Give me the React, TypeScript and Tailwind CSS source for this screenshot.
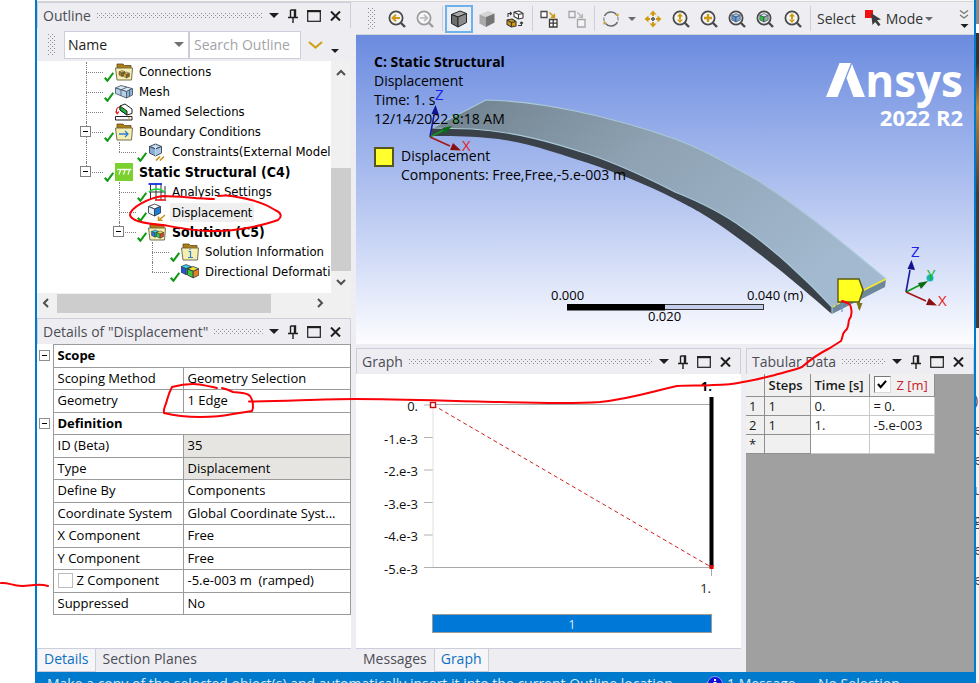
import { Fragment, useId, type ReactNode } from "react";

/* ---------- shared bits ---------- */

function Grip({ className }: { className: string }) {
  const id = useId();
  return (
    <svg className={className} aria-hidden="true">
      <defs>
        <pattern id={id} width="4" height="4" patternUnits="userSpaceOnUse">
          <rect x="0" y="0" width="1" height="1" fill="#8f8f96" />
          <rect x="2" y="2" width="1" height="1" fill="#8f8f96" />
        </pattern>
      </defs>
      <rect width="100%" height="100%" fill={`url(#${id})`} />
    </svg>
  );
}

function Caret({ color = "#1e1e1e", className = "h-[5px] w-[10px]" }: { color?: string; className?: string }) {
  return (
    <svg viewBox="0 0 10 5" className={className} aria-hidden="true">
      <path d="M0 0H10L5 5Z" fill={color} />
    </svg>
  );
}

function PanelHeader({ title }: { title: string }) {
  return (
    <header className="flex h-[26px] shrink-0 items-center border border-b-0 border-[#cccedb] bg-[#eeeef2] pr-[9px] pl-[5px] text-[#4c4c55]">
      <h2 className="whitespace-nowrap text-sm leading-5">{title}</h2>
      <Grip className="ml-[6px] mr-[6px] h-[5px] min-w-0 flex-1" />
      <div className="flex items-center gap-[9px]">
        <button aria-label="Panel menu">
          <Caret />
        </button>
        <button aria-label="Pin panel">
          <svg viewBox="0 0 10 14" className="h-[14px] w-[10px]">
            <path d="M2.5 1H7.5V8M2.5 1V8M6.5 1V8M0 8.5H10M5 9V14" stroke="#1e1e1e" strokeWidth="1.4" fill="none" />
          </svg>
        </button>
        <button aria-label="Maximize panel">
          <svg viewBox="0 0 14 12" className="h-3 w-[14px]">
            <rect x="0.7" y="0.7" width="12.6" height="10.6" fill="none" stroke="#1e1e1e" strokeWidth="1.2" />
            <path d="M0 1.2H14" stroke="#1e1e1e" strokeWidth="2" />
          </svg>
        </button>
        <button aria-label="Close panel">
          <svg viewBox="0 0 11 10" className="h-[10px] w-[11px]">
            <path d="M1 0.5L10 9.5M10 0.5L1 9.5" stroke="#1e1e1e" strokeWidth="2" />
          </svg>
        </button>
      </div>
    </header>
  );
}

function Tab({ label, active = false }: { label: string; active?: boolean }) {
  return (
    <button
      role="tab"
      aria-selected={active}
      className={
        active
          ? "flex h-full items-start border-r border-l border-b border-[#cccedb] bg-[#f6f6f8] px-[6px] text-sm leading-5 text-[#0e70c0]"
          : "flex h-full items-start px-[7px] text-sm leading-5 text-[#4c4c55]"
      }
    >
      {label}
    </button>
  );
}

/* ---------- outline tree ---------- */

function Folder({ children }: { children?: ReactNode }) {
  return (
    <g>
      <path d="M2 5V1H8L9.500 2.500H16V6Z" fill="#b07d12" stroke="#5d4a1c" strokeWidth="0.8" />
      <path d="M0.5 5H17.5L16.5 17H2Z" fill="#f6efb4" stroke="#77704e" strokeWidth="1" />
      {children}
    </g>
  );
}

function Cube({ x, y, s, top, left, right }: { x: number; y: number; s: number; top: string; left: string; right: string }) {
  return (
    <g transform={`translate(${x} ${y}) scale(${s})`} stroke="#33404d" strokeWidth="0.9" strokeLinejoin="round">
      <path d="M6 0L12 2.5L6 5L0 2.5Z" fill={top} />
      <path d="M0 2.5L6 5V12L0 9Z" fill={left} />
      <path d="M12 2.5L6 5V12L12 9Z" fill={right} />
    </g>
  );
}

const treeIcons: Record<string, ReactNode> = {
  connections: (
    <Folder>
      <Cube x={4} y={7.5} s={0.5} top="#e0b24b" left="#b07d12" right="#8f650c" />
      <Cube x={8.5} y={9} s={0.5} top="#e0b24b" left="#d8a531" right="#8f650c" />
    </Folder>
  ),
  mesh: (
    <g stroke="#4b5a6b" strokeWidth="0.9" fill="#b7cfe8" strokeLinejoin="round">
      <path d="M0.5 5L6 2.5L17 5.5L11.5 8.5Z" fill="#dce9f6" />
      <path d="M0.5 5L11.5 8.5V15L0.5 10.5Z" />
      <path d="M11.5 8.5L17.5 5.5V12L11.5 15Z" fill="#8fb2d8" />
      <path d="M6 6.8V12.7M6 6.8L12 4.2M14.5 7V13.5" fill="none" />
    </g>
  ),
  named: (
    <g strokeLinejoin="round">
      <path d="M5 3L10 1L17 6V10.5L12 12L5 7Z" fill="#fff" stroke="#222" />
      <path d="M5 3L12 8V12L5 7Z" fill="#1fb834" stroke="#222" />
      <path d="M4 4C1 5 1 8 2 10M0.5 8.5L2.2 10.8L4 8.5" fill="none" stroke="#e02020" strokeWidth="1.2" />
      <path d="M0.5 13.500H17V17H0.5Z" fill="#fff" stroke="#222" />
      <path d="M13 15H15" stroke="#c99700" />
    </g>
  ),
  boundary: (
    <Folder>
      <path d="M4 11H13M10 8L13 11L10 14" fill="none" stroke="#2a7fd0" strokeWidth="1.3" />
    </Folder>
  ),
  constraint: (
    <g>
      <Cube x={1.5} y={1} s={1} top="#c4dcf3" left="#86aeda" right="#a9c8e8" />
      <path d="M7.5 3.5V13" stroke="#e8f2fb" strokeWidth="0.8" />
      <path d="M8 17.5L12 13.5M12 17.5L16 13.5" stroke="#c8951c" strokeWidth="1.7" />
    </g>
  ),
  structural: (
    <g>
      <rect width="18" height="18" fill="#7ad02c" />
      <path d="M2 6.500H16.500" stroke="#fff" strokeWidth="1.400" />
      <path d="M5.500 7L4 11.500M10 7L8.500 11.500M14.500 7L13 11.500" stroke="#fff" strokeWidth="1.2" fill="none" />
    </g>
  ),
  settings: (
    <g>
      <path d="M2.5 1V17M8 1V17M13 1V17M17 3V16M1 9H17" stroke="#333" strokeWidth="1" />
      <path d="M0.5 1H14" stroke="#1430e0" strokeWidth="1.8" />
      <path d="M1 9C5 5 12 5 17 9" stroke="#16d43a" strokeWidth="1.3" fill="none" />
      <path d="M7 17H18" stroke="#e01818" strokeWidth="1.6" />
    </g>
  ),
  displacement: (
    <g>
      <Cube x={0.5} y={1} s={1} top="#ffffff" left="#eaf1f8" right="#1b7fd6" />
      <path d="M17 12L11 17M10.5 13.5V17.2H14.5" stroke="#c8951c" strokeWidth="1.6" fill="none" />
    </g>
  ),
  solution: (
    <Folder>
      <Cube x={3.500} y={7} s={0.6} top="#3ad0e0" left="#2a74d8" right="#2fb54b" />
      <Cube x={8.5} y={8} s={0.6} top="#f2e12e" left="#3fc14c" right="#e2401f" />
    </Folder>
  ),
  info: (
    <Folder>
      <path d="M7.5 8.5H9.5V14M7 14.5H12M9 5.8V7" stroke="#2a7fd0" strokeWidth="1.2" fill="none" />
    </Folder>
  ),
  deform: (
    <g>
      <Cube x={0} y={1.5} s={0.85} top="#3ad0e0" left="#2458d8" right="#2fb54b" />
      <Cube x={6.500} y={3.500} s={0.95} top="#f2e12e" left="#45c43e" right="#e8801c" />
    </g>
  ),
};

type Node = {
  label: string;
  icon: string;
  guides: boolean[]; // one per ancestor column: whether its line runs through this row
  last?: boolean;
  open?: boolean;
  check?: boolean;
  bold?: boolean;
  selected?: boolean;
};

const nodes: Node[] = [
  { label: "Connections", icon: "connections", guides: [], check: true },
  { label: "Mesh", icon: "mesh", guides: [], check: true },
  { label: "Named Selections", icon: "named", guides: [] },
  { label: "Boundary Conditions", icon: "boundary", guides: [], check: true, open: true },
  { label: "Constraints(External Model)", icon: "constraint", guides: [true], check: true, last: true },
  { label: "Static Structural (C4)", icon: "structural", guides: [], check: true, open: true, bold: true, last: true },
  { label: "Analysis Settings", icon: "settings", guides: [false], check: true },
  { label: "Displacement", icon: "displacement", guides: [false], check: true, selected: true },
  { label: "Solution (C5)", icon: "solution", guides: [false], check: true, open: true, bold: true, last: true },
  { label: "Solution Information", icon: "info", guides: [false, false], check: true },
  { label: "Directional Deformation", icon: "deform", guides: [false, false], check: true, last: true },
];

function TreeRow({ node }: { node: Node }) {
  return (
    <li role="treeitem" aria-selected={!!node.selected} className="flex h-5 items-center whitespace-nowrap pl-[49px]">
      {node.guides.map((on, i) => (
        <span key={i} className={on ? "h-full w-[33px] shrink-0 border-l border-dotted border-[#808080]" : "h-full w-[33px] shrink-0"} />
      ))}
      <span className="relative h-full w-[29px] shrink-0">
        <span
          className={
            node.last
              ? "absolute top-0 left-0 h-[10px] border-l border-dotted border-[#808080]"
              : "absolute top-0 left-0 h-full border-l border-dotted border-[#808080]"
          }
        />
        <span className="absolute top-[10px] left-0 w-[17px] border-t border-dotted border-[#808080]" />
        {node.open && (
          <button aria-label={`Collapse ${node.label}`} className="absolute top-1 -left-[6px] flex size-[11px] items-center justify-center border border-[#808080] bg-white">
            <span className="h-px w-[5px] bg-black" />
          </button>
        )}
        {node.check && (
          <svg viewBox="0 0 10 10" className="absolute top-[10px] left-[18px] size-[10px]">
            <path d="M0.8 5.8L3.4 8.8L9.3 0.8" stroke="#109a14" strokeWidth="2.1" fill="none" />
          </svg>
        )}
      </span>
      <svg viewBox="0 0 18 18" className="size-[18px] shrink-0" aria-hidden="true">
        {treeIcons[node.icon]}
      </svg>
      <span
        className={
          node.bold
            ? "ml-1 px-[2px] text-sm leading-5 font-bold"
            : node.selected
              ? "ml-1 bg-[#efefef] px-[2px] leading-[19px]"
              : "ml-1 px-[2px] leading-5"
        }
      >
        {node.label}
      </span>
    </li>
  );
}

function Arrow({ d }: { d: string }) {
  return (
    <svg viewBox="0 0 10 10" className="size-[10px]" aria-hidden="true">
      <path d={d} fill="none" stroke="#505050" strokeWidth="2" />
    </svg>
  );
}

function Outline() {
  return (
    <section className="flex shrink-0 flex-col">
      <PanelHeader title="Outline" />
      <div className="flex h-[33px] items-center bg-[#eeeef2] pl-[11px]">
        <Grip className="mr-[9px] h-[21px] w-[7px]" />
        <label className="relative flex h-7 w-[125px] items-center border border-[#cccedb] bg-white">
          <select aria-label="Search by" defaultValue="Name" className="h-full w-full appearance-none bg-transparent pl-[3px] text-sm text-[#1e1e1e]">
            <option>Name</option>
          </select>
          <span className="pointer-events-none absolute right-1">
            <Caret color="#717171" />
          </span>
        </label>
        <input
          aria-label="Search Outline"
          placeholder="Search Outline"
          className="h-7 w-[112px] border border-[#cccedb] bg-white pl-1 text-sm placeholder:text-[#a3a3a8]"
        />
        <button aria-label="Expand search" className="ml-[7px]">
          <svg viewBox="0 0 15 8" className="h-2 w-[15px]">
            <path d="M1 1L7.5 6.5L14 1" stroke="#cfa21c" strokeWidth="2.2" fill="none" />
          </svg>
        </button>
        <button aria-label="More" className="mt-3 ml-2">
          <Caret className="h-1 w-2" />
        </button>
      </div>
      <div className="flex h-[232px] bg-white">
        <ul role="tree" className="min-w-0 flex-1 overflow-hidden pt-px font-['DejaVu_Sans_Condensed','Noto_Sans',sans-serif] text-[13px] text-black">
          {nodes.map((n) => (
            <TreeRow key={n.label} node={n} />
          ))}
        </ul>
        <div className="flex w-5 flex-col items-center bg-[#f0f0f0] pt-[7px] pb-[6px]">
          <Arrow d="M1 7L5 3L9 7" />
          <div className="mt-[90px] h-[103px] w-full bg-[#cdcdcd]" />
          <div className="mt-auto">
            <Arrow d="M1 3L5 7L9 3" />
          </div>
        </div>
      </div>
      <div className="flex h-[25px] items-start bg-[#f0f0f0]">
        <div className="flex h-5 w-full items-center px-1">
          <Arrow d="M7 1L3 5L7 9" />
          <div className="ml-[6px] h-[19px] w-[214px] bg-[#cdcdcd]" />
          <div className="mr-[22px] ml-auto">
            <Arrow d="M3 1L7 5L3 9" />
          </div>
        </div>
      </div>
    </section>
  );
}

/* ---------- details ---------- */

type Prop = { name: string; value?: string; group?: boolean; readOnly?: boolean; box?: boolean };

const props: Prop[] = [
  { name: "Scope", group: true },
  { name: "Scoping Method", value: "Geometry Selection" },
  { name: "Geometry", value: "1 Edge" },
  { name: "Definition", group: true },
  { name: "ID (Beta)", value: "35", readOnly: true },
  { name: "Type", value: "Displacement", readOnly: true },
  { name: "Define By", value: "Components" },
  { name: "Coordinate System", value: "Global Coordinate Syst..." },
  { name: "X Component", value: "Free" },
  { name: "Y Component", value: "Free" },
  { name: "Z Component", value: "-5.e-003 m  (ramped)", box: true },
  { name: "Suppressed", value: "No" },
];

function Details() {
  return (
    <section className="flex min-h-0 flex-1 flex-col">
      <PanelHeader title={'Details of "Displacement"'} />
      <div className="min-h-0 flex-1 bg-white">
        <table className="h-[271px] w-full table-fixed border-collapse text-[13px] leading-4 text-black">
          <colgroup>
            <col className="w-4" />
            <col className="w-[130px]" />
            <col />
          </colgroup>
          <tbody>
            {props.map((p) => (
              <tr key={p.name}>
                <td className="p-0">
                  {p.group && (
                    <button aria-label={`Collapse ${p.name}`} className="ml-[2px] flex size-[11px] items-center justify-center border border-[#909090] bg-white">
                      <span className="h-px w-[5px] bg-black" />
                    </button>
                  )}
                </td>
                {p.group ? (
                  <th colSpan={2} className="border border-[#9b9b9b] p-0 pb-px pl-1 text-left font-bold">
                    {p.name}
                  </th>
                ) : (
                  <Fragment>
                    <th scope="row" className="border border-[#9b9b9b] p-0 pb-px pl-1 text-left font-normal whitespace-nowrap">
                      {p.box ? (
                        <label className="flex items-center gap-1">
                          <input type="checkbox" className="size-[15px] appearance-none border border-[#bdbdbd] bg-white" />
                          {p.name}
                        </label>
                      ) : (
                        p.name
                      )}
                    </th>
                    <td
                      className={
                        p.readOnly
                          ? "border border-[#9b9b9b] bg-[#e6e5e1] p-0 pb-px pl-1 whitespace-pre"
                          : "border border-[#9b9b9b] p-0 pb-px pl-1 whitespace-pre"
                      }
                    >
                      {p.value}
                    </td>
                  </Fragment>
                )}
              </tr>
            ))}
          </tbody>
        </table>
      </div>
      <div role="tablist" className="flex h-6 shrink-0 border-t border-[#cccedb] bg-[#eeeef2]">
        <Tab label="Details" active />
        <Tab label="Section Planes" />
      </div>
    </section>
  );
}

/* ---------- graphics toolbar ---------- */

function Lens({ children, color = "#4a4a4a" }: { children?: ReactNode; color?: string }) {
  return (
    <svg viewBox="0 0 18 18" className="size-[18px]" aria-hidden="true">
      <circle cx="8" cy="8" r="6.6" fill="#f6f6f8" stroke={color} strokeWidth="1.8" />
      <path d="M12.5 12.5L17 17" stroke={color} strokeWidth="2.4" />
      {children}
    </svg>
  );
}

function ToolButton({ label, active = false, children }: { label: string; active?: boolean; children: ReactNode }) {
  return (
    <button
      aria-label={label}
      className={
        active
          ? "flex h-7 w-7 shrink-0 items-center justify-center border-2 border-[#6fb1ea] bg-[#eaeef5]"
          : "flex h-7 w-7 shrink-0 items-center justify-center"
      }
    >
      {children}
    </button>
  );
}

const Sep = () => <span className="mr-[2px] ml-[3px] h-[25px] w-px shrink-0 bg-[#cccedb]" />;

function SolidCube({ top, left, right, edge }: { top: string; left: string; right: string; edge: string }) {
  return (
    <svg viewBox="0 0 18 18" className="size-[18px]" aria-hidden="true">
      <g stroke={edge} strokeWidth="1" strokeLinejoin="round">
        <path d="M10 1L16.5 3.500L8 7L1.5 4.500Z" fill={top} />
        <path d="M1.5 4.500L8 7V17L1.5 13.5Z" fill={left} />
        <path d="M16.5 3.500L8 7V17L16.5 12.5Z" fill={right} />
      </g>
    </svg>
  );
}

function Toolbar() {
  return (
    <div role="toolbar" aria-label="Graphics" className="flex h-[33px] shrink-0 items-center overflow-hidden border-b border-[#d5d5dc] bg-[#eeeef2] pt-px pl-3 text-sm text-[#333]">
      <Grip className="mr-2 h-[21px] w-[7px] shrink-0" />
      <ToolButton label="Previous view">
        <Lens>
          <path d="M12 8H5M8 4.8L4.6 8L8 11.2" stroke="#d09a10" strokeWidth="2" fill="none" />
        </Lens>
      </ToolButton>
      <ToolButton label="Next view">
        <Lens color="#9c9c9c">
          <path d="M4 8H11M8 4.8L11.4 8L8 11.2" stroke="#b8b8b8" strokeWidth="1.6" fill="none" />
        </Lens>
      </ToolButton>
      <Sep />
      <ToolButton label="Shaded exterior and edges" active>
        <SolidCube top="#a8a8a8" left="#6d6d6d" right="#8a8a8a" edge="#262626" />
      </ToolButton>
      <ToolButton label="Shaded exterior">
        <SolidCube top="#d4d4d4" left="#a8a8a8" right="#757575" edge="none" />
      </ToolButton>
      <ToolButton label="Wireframe">
        <svg viewBox="0 0 18 18" className="size-[18px]">
          <g stroke="#3c3c3c" strokeWidth="1.1" strokeLinejoin="round">
            <path d="M8 2L13 1L17 3.5V8L12.5 9L8 6.5ZM8 2L12.5 4.5L17 3.5M12.5 4.5V9" fill="#fff" />
            <path d="M1 10L6 9L10 11.5V16L5.5 17L1 14.5Z" fill="#d09a10" />
            <path d="M1 10L5.5 12.5L10 11.5M5.5 12.5V17" fill="none" />
            <path d="M2 7V3.5H5M4 2L5.5 3.5L4 5M12 15.5H15.5V12.5M14 13.5L15.5 12L17 13.5" fill="none" />
          </g>
        </svg>
      </ToolButton>
      <Sep />
      <ToolButton label="Show mesh">
        <svg viewBox="0 0 18 18" className="size-[18px]">
          <path d="M1 1.5H7V7.5H1Z" fill="#fff" stroke="#4a4a4a" strokeWidth="1.3" />
          <path d="M9.5 9.5H17V17H9.5ZM13.2 9.5V17M9.5 13.2H17" fill="#fff" stroke="#3a3a3a" strokeWidth="1.3" />
          <path d="M9.5 2.5L14 7M14.4 3.8V7.4H10.8" stroke="#d09a10" strokeWidth="1.6" fill="none" />
        </svg>
      </ToolButton>
      <ToolButton label="Show elements">
        <svg viewBox="0 0 18 18" className="size-[18px]">
          <path d="M1 1.5H7V7.5H1ZM9.5 9.5H17V17H9.5Z" fill="#f4f4f6" stroke="#a5a5a5" strokeWidth="1.3" />
          <path d="M9.5 2.5L14 7M14.4 3.8V7.4H10.8" stroke="#b5b5b5" strokeWidth="1.3" fill="none" />
        </svg>
      </ToolButton>
      <Sep />
      <ToolButton label="Rotate">
        <svg viewBox="0 0 18 18" className="size-[18px]">
          <path d="M2.500 6A7.2 7.2 0 0 1 14.500 4.500M15.500 12A7.2 7.2 0 0 1 3.500 13.500" fill="none" stroke="#6a6a6a" strokeWidth="1.5" />
          <path d="M15.500 6.500C16.300 8 16.300 9 16 10.500M2.500 11.500C1.700 10 1.700 9 2 7.500" stroke="#8a8a8a" strokeWidth="1.3" fill="none" />
          <path d="M13.500 6H16.500V3ZM4.500 12H1.500V15Z" fill="#d09a10" />
        </svg>
      </ToolButton>
      <button aria-label="Rotate options" className="mx-[3px] shrink-0">
        <Caret color="#6a6a6a" className="h-1 w-2" />
      </button>
      <ToolButton label="Pan">
        <svg viewBox="0 0 18 18" className="size-[18px]">
          <path d="M9 0.5L12.500 4.5H5.500ZM9 17.5L12.500 13.5H5.500ZM0.5 9L4.5 5.500V12.500ZM17.5 9L13.5 5.500V12.500Z" fill="#d09a10" />
          <path d="M8 4H10V6H8ZM8 12H10V14H8ZM4 8H6V10H4ZM12 8H14V10H12Z" fill="#d09a10" />
          <path d="M8 7H10V11H8ZM7 8H11V10H7Z" fill="#6a6a6a" />
        </svg>
      </ToolButton>
      <ToolButton label="Zoom">
        <Lens>
          <path d="M8 3L11 6.5H5ZM8 13L11 9.5H5ZM7 6H9V10H7Z" fill="#d09a10" />
        </Lens>
      </ToolButton>
      <ToolButton label="Zoom in">
        <Lens>
          <path d="M8 4V12M4 8H12" stroke="#d09a10" strokeWidth="2.4" />
        </Lens>
      </ToolButton>
      <ToolButton label="Zoom to fit">
        <Lens>
          <Cube x={3.8} y={3.6} s={0.7} top="#a8c6ea" left="#5c93d6" right="#79a8df" />
        </Lens>
      </ToolButton>
      <ToolButton label="Zoom to selection">
        <Lens>
          <Cube x={3.8} y={3.6} s={0.7} top="#d8e4ee" left="#2fc23e" right="#8fb0a0" />
        </Lens>
      </ToolButton>
      <ToolButton label="Box zoom">
        <Lens>
          <path d="M8 3L11 6.5H5ZM8 13L11 9.5H5ZM7 6H9V10H7Z" fill="#d09a10" />
        </Lens>
      </ToolButton>
      <Sep />
      <span className="ml-1">Select</span>
      <button className="ml-[9px] flex items-center gap-1">
        <svg viewBox="0 0 17 17" className="size-[17px]">
          <path d="M0 0H8V8H0Z" fill="#f01010" />
          <path d="M6 3L16 9.5L12 10.3L15.5 14.5L13.5 16.2L10.2 12L7.5 15Z" fill="#3c3c3c" />
        </svg>
        Mode
        <Caret color="#6a6a6a" className="-ml-[2px] h-1 w-2" />
      </button>
      <button aria-label="Toolbar options" className="mr-[5px] ml-auto flex flex-col items-center gap-[5px]">
        <svg viewBox="0 0 10 9" className="h-[9px] w-[10px]">
          <path d="M1 0.5L5 3.5L9 0.5M1 5L5 8L9 5" fill="none" stroke="#777" strokeWidth="1.3" />
        </svg>
        <Caret className="h-1 w-[9px]" />
      </button>
    </div>
  );
}

/* ---------- 3D view ---------- */

function Triad({ x, y, children }: { x: number; y: number; children?: ReactNode }) {
  return (
    <g transform={`translate(${x} ${y})`} strokeWidth="1.6" className="text-[15px]">
      <path d="M0 0L4 -22" stroke="#1a1a9c" />
      <path d="M5.500 -32L9 -22L1.500 -23Z" fill="#12128c" />
      <path d="M0 0L14 -7" stroke="#0a9a1c" />
      <path d="M22 -11L15 -3L12 -9Z" fill="#0a6a18" />
      <path d="M0 0L20 9" stroke="#a01818" />
      <path d="M31 13.500L20 13L23 6Z" fill="#8a1010" />
      {children}
    </g>
  );
}

function Viewport() {
  return (
    <div className="relative h-[309px] shrink-0 overflow-hidden bg-linear-to-b from-[#6b8bdf] via-[#b0c1ef] to-[#fdfdff] text-sm leading-[19px] text-black">
      <svg viewBox="356 35 618 309" preserveAspectRatio="xMinYMin slice" className="absolute inset-0 h-full w-full" aria-hidden="true">
        <defs>
          <linearGradient id="plate" x1="0" y1="0" x2="1" y2="0.6">
            <stop offset="0" stopColor="#6f808c" />
            <stop offset="0.45" stopColor="#8ea2b3" />
            <stop offset="1" stopColor="#a3b9cf" />
          </linearGradient>
        </defs>
        <path
          d="M432 128L486 100C540 101 610 116 675 139C705 150 732 166 757 180C800 207 840 241 886 279L832 307C806 279 770 246 743 228C720 211 695 200 675 192C640 174 615 163 588 154C560 145 520 132 472 129Z"
          fill="url(#plate)"
        />
        <path
          d="M432 128L472 129C520 132 560 145 588 154C615 163 640 174 675 192C695 200 720 211 743 228C770 246 806 279 832 307V314C806 292 780 268 727 230C700 211 690 207 675 199C645 184 620 174 588 163C560 154 520 140 488 138C465 136 450 136 431 136Z"
          fill="#3a4148"
        />
        <path d="M832 307L886 279L885 287L832 314Z" fill="#6d879b" />
        <path
          d="M432 128L486 100C540 101 610 116 675 139C705 150 732 166 757 180C800 207 840 241 886 279M432 128L472 129C520 132 560 145 588 154C615 163 640 174 675 192C695 200 720 211 743 228C770 246 806 279 832 307V314"
          fill="none"
          stroke="#a9c9d8"
          strokeWidth="1.2"
        />
        <path d="M862 291L886 279" stroke="#f1ea2a" strokeWidth="1.6" />
        <path d="M833 307L840 303" stroke="#f1ea2a" strokeWidth="1.2" strokeDasharray="3 2" />
        <path d="M842 298V312M838 302H846" stroke="#6f8fe0" strokeWidth="1.2" />
        <path d="M859 280L863 290L859 302V309" fill="none" stroke="#6b6612" strokeWidth="1.4" />
        <path d="M856.500 303H862.500L859.500 311Z" fill="#7c7616" />
        <path d="M838 279H859L863 290L859 302H838Z" fill="#ffff20" stroke="#5a5a12" strokeWidth="1.4" />

        <Triad x={430} y={137}>
          <text x="5" y="-37" fill="#2020e8">Z</text>
          <text x="22" y="-13" fill="#10b820">Y</text>
          <text x="32" y="14" fill="#e82020">X</text>
        </Triad>
        <Triad x={906} y={292}>
          <circle cx="24" cy="-14" r="3.500" fill="#18b4b8" />
          <text x="5" y="-35" fill="#2020e8">Z</text>
          <text x="21" y="-12" fill="#10b820">Y</text>
          <text x="32" y="14" fill="#e82020">X</text>
        </Triad>

        <rect x="567.500" y="304.500" width="196" height="5" fill="#c4cdea" stroke="#333" />
        <rect x="567" y="304" width="98" height="6.500" fill="#000" />
        <g className="text-[13px]">
          <text x="551" y="300">0.000</text>
          <text x="648" y="321">0.020</text>
          <text x="747" y="300">0.040 (m)</text>
        </g>
      </svg>
      <div className="absolute top-[17px] left-[18px] whitespace-nowrap">
        <p className="font-bold">C: Static Structural</p>
        <p>Displacement</p>
        <p>Time: 1. s</p>
        <p>12/14/2022 8:18 AM</p>
        <div className="mt-[18px] flex">
          <span className="mt-px size-5 border-2 border-[#55551c] bg-[#ffff2e]" />
          <div className="ml-[7px]">
            <p>Displacement</p>
            <p>Components: Free,Free,-5.e-003 m</p>
          </div>
        </div>
      </div>
      <div className="absolute top-[25px] right-[11px] text-right font-bold text-white">
        <div className="flex items-end">
          <svg viewBox="0 0 39 34" className="h-[34px] w-[39px]" role="img" aria-label="A">
            <path d="M0 34L13.500 0H25L11.500 34Z" fill="#fff" />
            <path d="M26 1L39 34H27.500L20.500 15Z" fill="#fff" />
          </svg>
          <span className="-mb-[3px] text-[44px] leading-10">nsys</span>
        </div>
        <p className="mt-2 text-[22px] leading-6">2022 R2</p>
      </div>
    </div>
  );
}

/* ---------- graph ---------- */

const ticks = ["0.", "-1.e-3", "-2.e-3", "-3.e-3", "-4.e-3", "-5.e-3"];

function Graph() {
  return (
    <section className="flex min-w-0 flex-1 flex-col">
      <PanelHeader title="Graph" />
      <div className="min-h-0 flex-1 bg-white">
        <svg viewBox="356 374 385 274" className="h-full w-full text-[13px]" role="img" aria-label="Displacement over time">
          {ticks.map((t, i) => (
            <g key={t}>
              <path d={`M424 ${405 + i * 32.5}H433`} stroke="#b0b0b0" />
              <text x="418" y={411 + i * 32.5} textAnchor="end" fill="#111">
                {t}
              </text>
            </g>
          ))}
          <path d="M433 404.500H711M433 567.500H711" stroke="#a8a8a8" />
          <path d="M433 405V567" stroke="#e0e0e0" />
          <path d="M711.500 568V576" stroke="#a8a8a8" />
          <path d="M433 405L711 567" stroke="#d02020" strokeDasharray="4 3" />
          <path d="M711.500 397V567" stroke="#000" strokeWidth="4" />
          <rect x="430.500" y="402.500" width="5" height="5" fill="#fff" stroke="#c01010" strokeWidth="1.400" />
          <rect x="709.500" y="565" width="4" height="4" fill="#e00000" />
          <text x="712" y="391" textAnchor="end" className="font-bold">1.</text>
          <text x="711" y="593" textAnchor="end" fill="#222">1.</text>
          <rect x="432.500" y="614.500" width="279" height="18" fill="#0078d7" stroke="#a09a94" />
          <text x="572" y="629" textAnchor="middle" fill="#d6e8f8">1</text>
        </svg>
      </div>
      <div role="tablist" className="flex h-6 shrink-0 border-t border-[#cccedb] bg-[#eeeef2]">
        <Tab label="Messages" />
        <Tab label="Graph" active />
      </div>
    </section>
  );
}

/* ---------- tabular data ---------- */

const rows = [
  ["1", "1", "0.", "= 0."],
  ["2", "1", "1.", "-5.e-003"],
  ["*", "", "", ""],
];

function Tabular() {
  return (
    <section className="flex w-[228px] shrink-0 flex-col">
      <PanelHeader title="Tabular Data" />
      <div className="min-h-0 flex-1 bg-[#a0a0a0]">
        <table className="w-[188px] table-fixed border-collapse text-[13px] leading-[18px] text-[#1a1a1a]">
          <colgroup>
            <col className="w-[18px]" />
            <col className="w-[46px]" />
            <col className="w-[59px]" />
            <col className="w-[65px]" />
          </colgroup>
          <thead>
            <tr className="h-[22px] bg-[#f0f0f0] text-left whitespace-nowrap">
              <th className="border-r border-b border-[#8f8f8f] p-0" />
              <th className="border-r border-b border-[#8f8f8f] p-0 pl-1 font-semibold">Steps</th>
              <th className="border-r border-b border-[#8f8f8f] p-0 pl-1 font-semibold">Time [s]</th>
              <th className="border-r border-b border-[#8f8f8f] p-0 pl-1 font-medium">
                <label className="flex items-center gap-[6px] text-[#c8202c]">
                  <span className="relative flex size-[17px] items-center">
                    <input type="checkbox" defaultChecked className="size-[17px] appearance-none border border-t-[#777] border-l-[#777] border-[#d8d8d8] bg-white" />
                    <svg viewBox="0 0 11 10" className="pointer-events-none absolute left-[3px] h-[9px] w-[10px]">
                      <path d="M1 4.500L4 8L10 1" stroke="#000" strokeWidth="2.400" fill="none" />
                    </svg>
                  </span>
                  Z [m]
                </label>
              </th>
            </tr>
          </thead>
          <tbody>
            {rows.map((r) => (
              <tr key={r[0]} className="h-[19px]">
                <td className="border-r border-b border-[#8f8f8f] bg-[#f0f0f0] p-0 pl-[3px]">{r[0]}</td>
                <td className="border-r border-b border-[#8f8f8f] bg-[#f0f0f0] p-0 pl-1">{r[1]}</td>
                <td className="border-r border-b border-[#c9c9c9] bg-white p-0 pl-1">{r[2]}</td>
                <td className="border-r border-b border-[#c9c9c9] bg-white p-0 pl-1">{r[3]}</td>
              </tr>
            ))}
          </tbody>
        </table>
      </div>
    </section>
  );
}

/* ---------- pen marks drawn over the window ---------- */

function PenMarks() {
  return (
    <svg viewBox="0 0 979 683" preserveAspectRatio="xMinYMin meet" className="pointer-events-none absolute inset-0 h-full w-full" aria-hidden="true">
      <g fill="none" stroke="#fb0007" strokeWidth="2" strokeLinecap="round" strokeLinejoin="round">
        <path d="M1 583C8 582 12 586 22 586S38 583 48 586" />
        <path d="M214 199C198 199 180 196 163 196C148 198 130 208 130 215C131 222 150 224 163 225C180 228 200 232 217 231C235 231 262 226 278 220C282 217 282 213 275 210C266 204 250 199 237 197C230 195 224 195 218 196" />
        <path d="M217 388C208 386 200 384 193 384C185 384 179 385 172 387C170 391 168 396 167 400C166 405 163 409 164 413C172 415 186 417 200 417C212 417 224 416 233 414L252 411C254 407 253 400 250 396C246 392 240 393 233 392C229 390 226 389 222 388" />
        <path d="M249 401.500C290 401 320 399 355 399C400 399 450 401 500 402C540 403 570 404 600 402C630 399 650 392 677 386C690 385 700 386 713 385C725 385 735 384 743 382C755 380 762 378 775 375C785 372 795 370 802 367C812 358 820 353 830 348L841 341C843 337 842 334 845 331C849 328 848 324 849 320C852 316 852 312 851 308C851 304 848 303 842 301" />
      </g>
    </svg>
  );
}

/* ---------- page behind the window, visible at the right edge ---------- */

const behind = [")", "e", "e", "u", "g", "e", "e"];

function Behind() {
  return (
    <aside className="flex w-[3px] shrink-0 flex-col overflow-hidden bg-[#f3f3f3]" aria-hidden="true">
      <div className="h-6 shrink-0 bg-[#8a8a8a]" />
      <div className="h-[9px] shrink-0 bg-white" />
      <div className="h-[295px] shrink-0 bg-linear-to-b from-[#333] from-10% via-[#b5872f] via-25% to-[#3c3c3c] to-55%" />
      <div className="-ml-[2px] mt-[57px] text-sm leading-[30px] text-[#444]">
        {behind.map((c, i) => (
          <div key={i}>{c}</div>
        ))}
      </div>
    </aside>
  );
}

export default function App() {
  return (
    <div className="relative flex h-screen overflow-hidden bg-white pl-[35px] font-['Open_Sans','Noto_Sans',sans-serif]">
      <main className="flex min-w-0 flex-1 flex-col border-r-2 border-l-2 border-[#007acc] bg-[#eeeef2]">
        <div className="h-[2px] shrink-0 border-b border-[#d6d6d6] bg-[#f7f7f7]" />
        <div className="flex min-h-0 flex-1">
          <div className="flex w-[314px] shrink-0 flex-col">
            <Outline />
            <Details />
          </div>
          <div className="ml-[5px] flex min-w-0 flex-1 flex-col">
            <Toolbar />
            <Viewport />
            <div className="mt-1 flex min-h-0 flex-1 gap-[5px]">
              <Graph />
              <Tabular />
            </div>
          </div>
        </div>
        <footer className="flex h-[11px] shrink-0 items-start overflow-hidden bg-[#007acc] pl-[10px] text-sm leading-6 whitespace-nowrap text-[#d8ebf9]">
          <span className="w-[658px]">Make a copy of the selected object(s) and automatically insert it into the current Outline location.</span>
          <svg viewBox="0 0 18 18" className="mt-[3px] mr-1 size-[18px]" aria-hidden="true">
            <path d="M0 9L5 5V14Z" fill="#f2e2b0" />
            <circle cx="10" cy="9" r="7.500" fill="#1414d8" stroke="#7fa0f0" />
            <path d="M10 4V6M8.500 8H10.500V13" stroke="#fff" strokeWidth="2" fill="none" />
          </svg>
          <span className="w-[91px]">1 Message</span>
          <span>No Selection</span>
        </footer>
      </main>
      <Behind />
      <PenMarks />
    </div>
  );
}
